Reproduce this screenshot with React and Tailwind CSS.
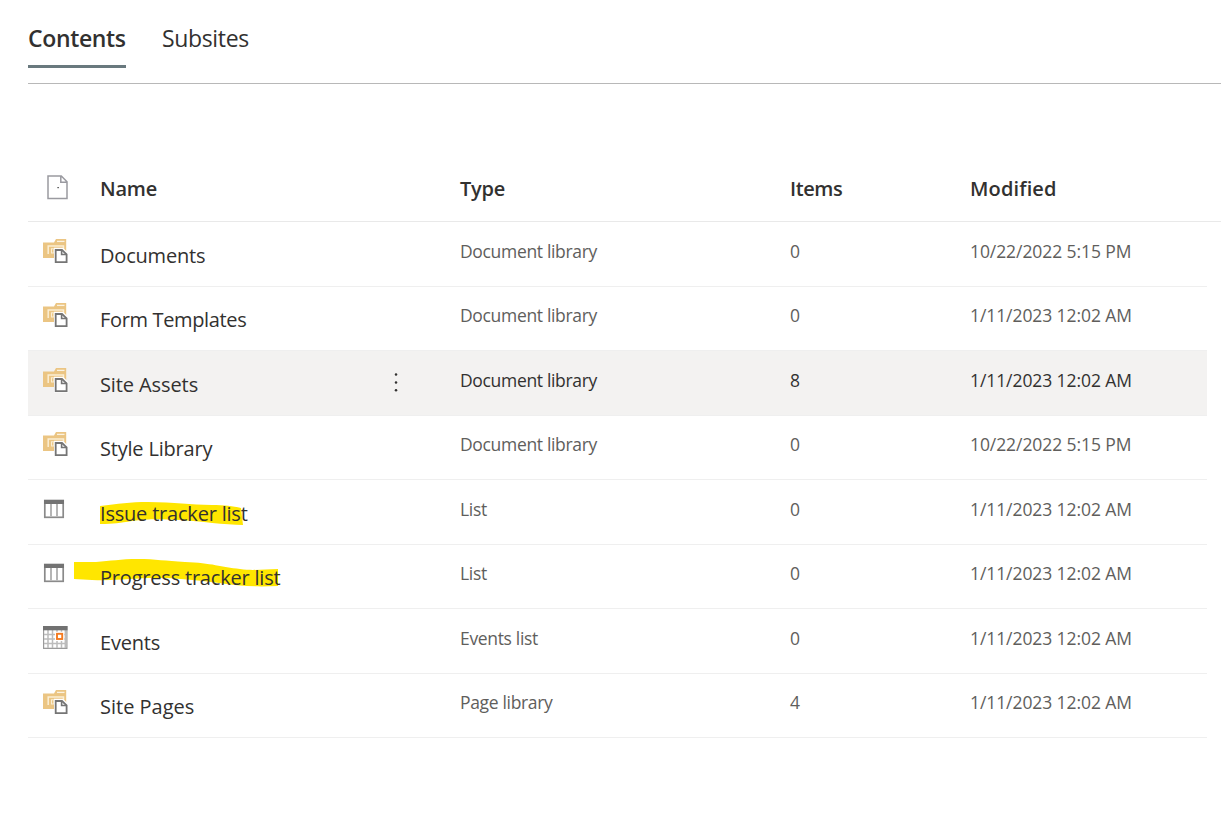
import React from "react";

function FolderIcon() {
  return (
    <svg width="26" height="26" viewBox="0 0 26 26" className="block">
      <path d="M0 4.5H11L13 1H23.2V20H0Z" fill="#ebc583" />
      <path d="M14 3.4H21.5" stroke="#fbf3e2" strokeWidth="1.3" />
      <path d="M5.2 16V8H20.5V12" fill="none" stroke="#fbeed4" strokeWidth="1.5" />
      <path d="M8.5 10.8H16V15H8.5ZM10.8 11V15" fill="none" stroke="#fbeed4" strokeWidth="1.1" />
      <path d="M11 9.8H20L25.3 15V25.6H11Z" fill="#fff" />
      <path d="M12.7 12H19L23.6 16.3V24.2H12.7Z" fill="#fff" stroke="#757575" strokeWidth="1.8" />
      <path d="M18.6 12V16.5H23.6" fill="none" stroke="#757575" strokeWidth="1.6" />
    </svg>
  );
}

function ListIcon() {
  return (
    <svg width="26" height="26" viewBox="0 0 26 26" className="block">
      <rect x="1.8" y="4.5" width="18.4" height="16.8" fill="#fff" stroke="#8a8a8a" strokeWidth="1.7" />
      <rect x="1" y="4" width="20" height="4" fill="#737373" />
      <path d="M8 8V20.5M14 8V20.5" stroke="#b5b5b5" strokeWidth="2" />
    </svg>
  );
}

function CalendarIcon() {
  return (
    <svg width="26" height="26" viewBox="0 0 26 26" className="block">
      <rect x="0" y="1" width="24.5" height="23" fill="#9b9b9b" />
      <rect x="1.2" y="5" width="22.1" height="17.7" fill="#fff" />
      <path d="M5 5V23M9.5 5V23M14 5V23M18.5 5V23M22.3 5V23M1 9.5H23.4M1 14H23.4M1 18.5H23.4" stroke="#bcbcbc" strokeWidth="1.5" />
      <rect x="0" y="1" width="24.5" height="4.3" fill="#717171" />
      <rect x="12" y="6.8" width="9.2" height="9.2" fill="#fff" />
      <rect x="14" y="8.8" width="5.2" height="5.2" fill="#fff" stroke="#f47a20" strokeWidth="1.9" />
    </svg>
  );
}

const icons = { folder: FolderIcon, list: ListIcon, calendar: CalendarIcon };

const rows = [
  { icon: "folder", name: "Documents", type: "Document library", items: 0, modified: "10/22/2022 5:15 PM" },
  { icon: "folder", name: "Form Templates", type: "Document library", items: 0, modified: "1/11/2023 12:02 AM", spacing: "tracking-[-0.35px]" },
  { icon: "folder", name: "Site Assets", type: "Document library", items: 8, modified: "1/11/2023 12:02 AM", active: true, spacing: "tracking-[-0.1px]" },
  { icon: "folder", name: "Style Library", type: "Document library", items: 0, modified: "10/22/2022 5:15 PM" },
  { icon: "list", name: "Issue tracker list", type: "List", items: 0, modified: "1/11/2023 12:02 AM", mark: "issue" },
  { icon: "list", name: "Progress tracker list", type: "List", items: 0, modified: "1/11/2023 12:02 AM", mark: "progress" },
  { icon: "calendar", name: "Events", type: "Events list", items: 0, modified: "1/11/2023 12:02 AM" },
  { icon: "folder", name: "Site Pages", type: "Page library", items: 4, modified: "1/11/2023 12:02 AM", spacing: "tracking-[0px]" },
];

function Marker({ kind }) {
  if (kind === "issue") {
    return (
      <svg className="absolute left-0 top-[21px]" width="146" height="28" viewBox="0 0 146 28">
        <path d="M0 5C18 3 30 1 48 1C75 1 90 4 112 4C124 4 133 5 141 7L143 24C125 24 100 20 80 19C62 18 45 18 32 20C20 22 14 23 0 23Z" fill="#ffe600" />
      </svg>
    );
  }
  return (
    <svg className="absolute -left-[26px] top-[12.5px]" width="206" height="32" viewBox="0 0 206 32">
      <path d="M0 5H22C37 4 46 2 64 2C82 2 91 4 111 5C138 6 147 10 166 12C180 14 190 12 204 12V29C180 30 164 29 145 26C123 23 103 21 82 21C59 21 44 24 18 23L0 22Z" fill="#ffe600" />
    </svg>
  );
}

const grid = "grid grid-cols-[72px_360px_330px_180px_1fr]";

export default function App() {
  return (
    <main className="h-[829px] w-[1221px] overflow-hidden bg-white pl-7 font-['Open_Sans','Noto_Sans',sans-serif] text-[#323130]">
      <nav className="flex h-[84px] gap-9 border-b border-[#b8b8b8] pt-[22px]">
        <div className="h-[46px] w-[98px] whitespace-nowrap border-b-3 border-[#69797e] text-[23px] font-semibold leading-[32px] tracking-[-0.35px]">Contents</div>
        <div className="whitespace-nowrap text-[23px] leading-[32px] tracking-[-0.35px]">Subsites</div>
      </nav>
      <header className={`${grid} mt-[72px] h-[66px] border-b border-[#e9e9e9] text-[20px] font-semibold leading-[66px] tracking-[-0.2px]`}>
        <div className="pl-[18.5px] pt-[19px]">
          <svg width="22" height="25" viewBox="0 0 22 25" className="block">
            <path d="M1 1H14.3L20 6.7V23.5H1Z M13.8 1V7.2H20" fill="#fff" stroke="#9a9aa0" strokeWidth="1.5" />
            <rect x="10.5" y="12" width="1.2" height="1.2" fill="#222" />
          </svg>
        </div>
        <div>Name</div>
        <div>Type</div>
        <div className="tracking-[-0.4px]">Items</div>
        <div className="tracking-[0.15px]">Modified</div>
      </header>
      <section className="w-[1179px]">
        {rows.map((row) => {
          const Icon = icons[row.icon];
          return (
            <div
              key={row.name}
              className={`${grid} h-[64.5px] border-b border-[#efefef] ${row.active ? "bg-[#f3f2f1]" : ""}`}
            >
              <div className="pl-[15px] pt-[15.5px]"><Icon /></div>
              <div className="relative flex justify-between pr-[59.5px] pt-[0.5px] text-[20px] leading-[66px]">
                {row.mark && <Marker kind={row.mark} />}
                <span className={`relative whitespace-nowrap ${row.spacing || "tracking-[-0.2px]"}`}>{row.name}</span>
                {row.active && (
                  <svg className="mt-[20.5px]" width="10" height="20" viewBox="0 0 10 20">
                    <circle cx="5" cy="2.5" r="1.25" fill="#323130" />
                    <circle cx="5" cy="10.5" r="1.25" fill="#323130" />
                    <circle cx="5" cy="18.3" r="1.25" fill="#323130" />
                  </svg>
                )}
              </div>
              <div className={`pt-[0.5px] text-[17.5px] leading-[56px] tracking-[-0.33px] ${row.active ? "" : "text-[#605e5c]"}`}>{row.type}</div>
              <div className={`pt-[0.5px] text-[17.5px] leading-[56px] ${row.active ? "" : "text-[#605e5c]"}`}>{row.items}</div>
              <div className={`whitespace-nowrap pt-[0.5px] text-[17.5px] leading-[56px] tracking-[-0.08px] ${row.active ? "" : "text-[#605e5c]"}`}>{row.modified}</div>
            </div>
          );
        })}
      </section>
    </main>
  );
}
